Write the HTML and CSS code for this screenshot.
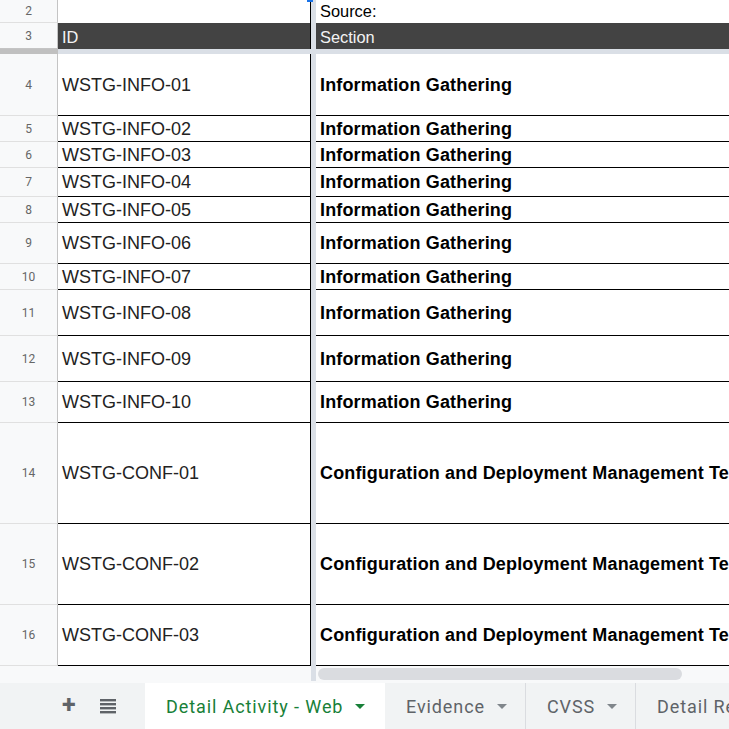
FILE: index.html
```html
<!DOCTYPE html>
<html>
<head>
<meta charset="utf-8">
<link rel="stylesheet" href="styles.css">
</head>
<body>
<div class="sheet">
  <div class="grid">
    <div class="row h23"><div class="rh">2</div><div class="ca"></div><div class="fz"></div><div class="cb small">Source:</div></div>
    <div class="row h26 dark"><div class="rh">3</div><div class="ca small">ID</div><div class="fz"></div><div class="cb small">Section</div></div>
    <div class="hdiv"><div class="hdiv-rh"></div><div class="hdiv-cells"></div></div>
    <div class="row h62 data"><div class="rh">4</div><div class="ca">WSTG-INFO-01</div><div class="fz"></div><div class="cb">Information Gathering</div></div>
    <div class="row h26 data"><div class="rh">5</div><div class="ca">WSTG-INFO-02</div><div class="fz"></div><div class="cb">Information Gathering</div></div>
    <div class="row h26 data"><div class="rh">6</div><div class="ca">WSTG-INFO-03</div><div class="fz"></div><div class="cb">Information Gathering</div></div>
    <div class="row h29 data"><div class="rh">7</div><div class="ca">WSTG-INFO-04</div><div class="fz"></div><div class="cb">Information Gathering</div></div>
    <div class="row h26 data"><div class="rh">8</div><div class="ca">WSTG-INFO-05</div><div class="fz"></div><div class="cb">Information Gathering</div></div>
    <div class="row h41 data"><div class="rh">9</div><div class="ca">WSTG-INFO-06</div><div class="fz"></div><div class="cb">Information Gathering</div></div>
    <div class="row h26 data"><div class="rh">10</div><div class="ca">WSTG-INFO-07</div><div class="fz"></div><div class="cb">Information Gathering</div></div>
    <div class="row h46 data"><div class="rh">11</div><div class="ca">WSTG-INFO-08</div><div class="fz"></div><div class="cb">Information Gathering</div></div>
    <div class="row h46 data"><div class="rh">12</div><div class="ca">WSTG-INFO-09</div><div class="fz"></div><div class="cb">Information Gathering</div></div>
    <div class="row h41 data"><div class="rh">13</div><div class="ca">WSTG-INFO-10</div><div class="fz"></div><div class="cb">Information Gathering</div></div>
    <div class="row h101 data"><div class="rh">14</div><div class="ca">WSTG-CONF-01</div><div class="fz"></div><div class="cb">Configuration and Deployment Management Testing</div></div>
    <div class="row h81 data"><div class="rh">15</div><div class="ca">WSTG-CONF-02</div><div class="fz"></div><div class="cb">Configuration and Deployment Management Testing</div></div>
    <div class="row h61 data"><div class="rh">16</div><div class="ca">WSTG-CONF-03</div><div class="fz"></div><div class="cb">Configuration and Deployment Management Testing</div></div>
    <div class="marker"></div>
  </div>
  <div class="hscroll">
    <div class="hs-left"></div>
    <div class="fz short"></div>
    <div class="hs-track"><div class="thumb"></div></div>
  </div>
  <div class="tabs">
    <div class="tab-tools">
      <span class="plus">+</span>
      <svg class="list" width="16" height="16" viewBox="0 0 16 16"><rect x="0" y="1" width="16" height="2.4" fill="#5f6368"/><rect x="0" y="5" width="16" height="2.4" fill="#5f6368"/><rect x="0" y="9" width="16" height="2.4" fill="#5f6368"/><rect x="0" y="13" width="16" height="2.4" fill="#5f6368"/></svg>
    </div>
    <div class="tab active">Detail Activity - Web<span class="caret"></span></div>
    <div class="tab">Evidence<span class="caret"></span></div>
    <div class="tab">CVSS<span class="caret"></span></div>
    <div class="tab">Detail Report</div>
  </div>
</div>
</body>
</html>
```
FILE: styles.css
```css
* { box-sizing: border-box; }
html, body { margin: 0; padding: 0; background: #fff; }
body { width: 729px; height: 729px; overflow: hidden; font-family: Arial, "Liberation Sans", sans-serif; }
.sheet { width: 729px; height: 729px; display: flex; flex-direction: column; overflow: hidden; }
.grid { position: relative; display: flex; flex-direction: column; flex: none; }
.row { display: flex; flex: none; }
.h23 { height: 23px; }
.h26 { height: 26px; }
.h29 { height: 29px; }
.h41 { height: 41px; }
.h46 { height: 46px; }
.h61 { height: 61px; }
.h62 { height: 62px; }
.h81 { height: 81px; }
.h101 { height: 101px; }
.rh {
  width: 58px; flex: none; background: #f8f9fa;
  border-right: 1px solid #c4c4c4; border-bottom: 1px solid #e0e0e0;
  display: flex; align-items: center; justify-content: center;
  font-family: Roboto, Arial, sans-serif; font-size: 12px; color: #666;
}
.ca {
  width: 253px; flex: none; border-right: 1px solid #000;
  display: flex; align-items: center; padding-left: 4px; padding-top: 1px;
  font-size: 18px; color: #222; white-space: nowrap; overflow: hidden;
}
.fz { width: 5px; flex: none; background: #dadfe6; }
.cb {
  flex: 1; min-width: 0; display: flex; align-items: center; padding-left: 4px; padding-top: 1px;
  font-size: 18px; font-weight: bold; color: #000; white-space: nowrap; overflow: hidden;
  letter-spacing: 0.15px;
}
.small { font-size: 16.4px; font-weight: normal; color: #000; letter-spacing: 0; padding-top: 2px; }
.h23 .cb { padding-top: 0; }
.dark .ca, .dark .cb { background: #434343; color: #f3f3f3; }
.dark .ca { border-right-color: #000; }
.dark .rh { border-bottom: 1px solid #c4c4c4; }
.data .ca, .data .cb { border-bottom: 1px solid #000; }
.hdiv { display: flex; height: 5px; flex: none; }
.hdiv-rh { width: 58px; background: #c0c0c0; }
.hdiv-cells { flex: 1; background: #dadfe6; }
.marker { position: absolute; left: 307px; top: 0; width: 6px; height: 2px; background: #1a73e8; }
.hscroll { display: flex; height: 17px; flex: none; background: #f8f9fa; }
.hs-left { width: 311px; flex: none; }
.fz.short { height: 15px; }
.hs-track { flex: 1; padding: 2px 0 0 2px; }
.thumb { width: 364px; height: 12px; border-radius: 6px; background: #dadce0; }
.tabs { flex: 1; display: flex; background: #f1f3f4; align-items: stretch; }
.tab-tools { width: 145px; flex: none; display: flex; align-items: center; padding-left: 62px; gap: 24px; color: #5f6368; }
.plus { font-family: Roboto, Arial, sans-serif; font-size: 25px; font-weight: 700; line-height: 1; margin-top: -3px; }
.list { display: block; }
.tab {
  display: flex; align-items: center; padding: 0 18px 0 21px; gap: 12px;
  font-family: Roboto, Arial, sans-serif; font-size: 18px; letter-spacing: 0.9px; color: #5f6368;
  border-right: 1px solid #dadce0; white-space: nowrap; flex: none;
}
.tab.active { background: #fff; color: #188038; width: 240px; padding-left: 21px; border-right: none; }
.caret { width: 0; height: 0; border-left: 5px solid transparent; border-right: 5px solid transparent; border-top: 5px solid currentColor; margin-top: 1px; }
.tab.active .caret { border-top-color: #188038; }
.tab .caret { border-top-color: #80868b; }
```
